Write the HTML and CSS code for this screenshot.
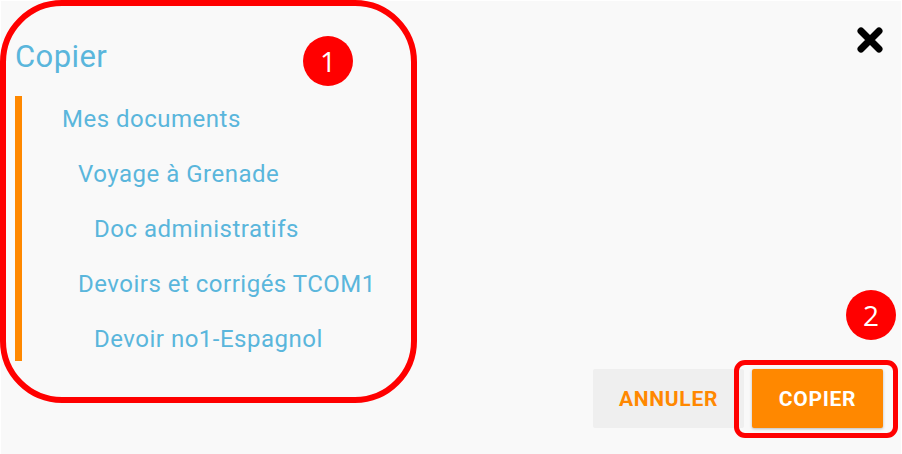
FILE: index.html
```html
<!DOCTYPE html>
<html lang="fr">
<head>
<meta charset="utf-8">
<title>Copier</title>
<link rel="stylesheet" href="styles.css">
</head>
<body>
<div class="dialog">
  <header class="dialog-header">
    <h1 class="dialog-title">Copier</h1>
    <button class="close" aria-label="Fermer">
      <svg width="26" height="26" viewBox="0 0 26 26"><path d="M4 4 L22 22 M22 4 L4 22" stroke="#000" stroke-width="7" stroke-linecap="round" fill="none"/></svg>
    </button>
  </header>
  <ul class="tree">
    <li class="lvl-1">Mes documents</li>
    <li class="lvl-2">Voyage à Grenade</li>
    <li class="lvl-3">Doc administratifs</li>
    <li class="lvl-2">Devoirs et corrigés TCOM1</li>
    <li class="lvl-3">Devoir no1-Espagnol</li>
  </ul>
  <footer class="dialog-footer">
    <button class="btn btn-cancel">ANNULER</button>
    <button class="btn btn-copy">COPIER</button>
  </footer>

  <div class="mark mark-tree"></div>
  <div class="mark mark-btn"></div>
  <span class="badge badge-1">1</span>
  <span class="badge badge-2">2</span>
</div>
</body>
</html>
```
FILE: styles.css
```css
* { box-sizing: border-box; }
html, body { margin: 0; padding: 0; background: #ffffff; }
body { font-family: Roboto, "Liberation Sans", sans-serif; }

.dialog {
  position: relative;
  margin: 1px 1px 0 1px;
  height: 453px;
  background: #f9f9f9;
  padding: 0 18px 0 14px;
  display: flex;
  flex-direction: column;
}

.dialog-header {
  height: 95px;
  display: flex;
  justify-content: space-between;
  align-items: flex-start;
}
.dialog-title {
  margin: 0;
  padding-top: 38px;
  font-size: 31px;
  line-height: 36px;
  letter-spacing: 0.4px;
  font-weight: 400;
  color: #5ab6dc;
}
.close {
  margin-top: 26px;
  padding: 0;
  border: 0;
  background: none;
  width: 26px;
  height: 26px;
  display: block;
}
.close svg { display: block; }

.tree {
  list-style: none;
  margin: 0;
  padding: 10px 0 9px 0;
  border-left: 7px solid #ff8800;
  display: flex;
  flex-direction: column;
  gap: 29px;
}
.tree li {
  font-size: 24px;
  line-height: 26px;
  letter-spacing: 0.5px;
  color: #5ab6dc;
  white-space: nowrap;
}
.lvl-1 { padding-left: 40px; }
.lvl-2 { padding-left: 56px; }
.lvl-3 { padding-left: 72px; }

.dialog-footer {
  margin-top: 8px;
  display: flex;
  justify-content: flex-end;
  gap: 8px;
}
.btn {
  height: 59px;
  border: 0;
  border-radius: 2px;
  font-family: Roboto, "Liberation Sans", sans-serif;
  font-weight: 700;
  font-size: 21px;
  letter-spacing: 0.7px;
  padding: 0;
}
.btn-cancel {
  width: 151px;
  background: #efefef;
  color: #ff8800;
}
.btn-copy {
  width: 131px;
  background: #ff8800;
  color: #ffffff;
  box-shadow: 0 1px 3px rgba(0,0,0,0.25);
}

.mark {
  position: absolute;
  border: 6px solid #ff0000;
  pointer-events: none;
}
.mark-tree {
  left: -1px;
  top: -1px;
  width: 417px;
  height: 403px;
  border-radius: 62px;
}
.mark-btn {
  left: 733px;
  top: 359px;
  width: 164px;
  height: 78px;
  border-width: 5px;
  border-radius: 11px;
}
.badge {
  position: absolute;
  width: 50px;
  height: 50px;
  border-radius: 50%;
  background: #ff0000;
  color: #ffffff;
  font-family: "Open Sans", "DejaVu Sans", sans-serif;
  font-size: 28px;
  line-height: 50px;
  text-align: center;
}
.badge-1 { left: 302px; top: 35px; }
.badge-2 { left: 845px; top: 289px; }
```
